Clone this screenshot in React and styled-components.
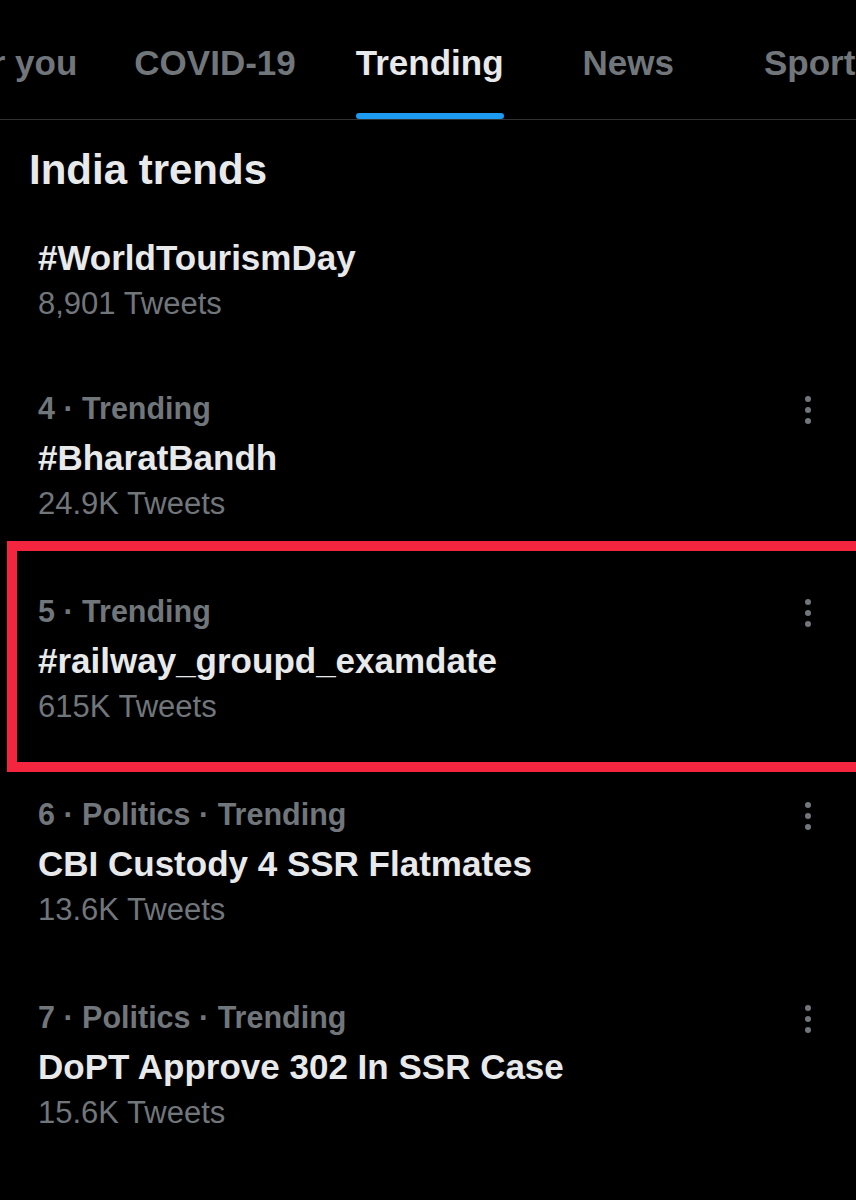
import React from 'react';
import styled, { createGlobalStyle } from 'styled-components';

const GlobalStyle = createGlobalStyle`
  html, body {
    margin: 0;
    padding: 0;
    background: #000;
    overflow-x: hidden;
  }
  body {
    font-family: "Liberation Sans", Arial, sans-serif;
    color: #e7e9ea;
  }
`

const Page = styled.div`
  width: 856px;
  min-height: 1200px;
  background: #000;
  overflow: hidden;
`

const TabBar = styled.nav`
  display: flex;
  height: 119px;
  border-bottom: 1px solid #2f3336;
  overflow: hidden;
`

const Tab = styled.div`
  flex-shrink: 0;
  display: flex;
  flex-direction: column;
  padding-top: 43px;
  margin-left: ${props => props.offset}px;
  font-size: 35px;
  line-height: 40px;
  font-weight: 700;
  white-space: nowrap;
  color: ${props => (props.active ? '#e7e9ea' : '#71767b')};
`

const Indicator = styled.div`
  margin-top: auto;
  height: 6px;
  border-radius: 3px;
  background: #1d9bf0;
`

const Title = styled.h2`
  margin: 0;
  padding: 22px 29px 0;
  font-size: 42px;
  line-height: 56px;
  font-weight: 700;
  color: #e7e9ea;
`

const Trend = styled.div`
  position: relative;
  display: flex;
  flex-direction: column;
  height: ${props => (props.first ? '164px' : '203px')};
  box-sizing: border-box;
  padding: ${props => (props.first ? '36px' : '20px')} 45px 0 38px;

  ${props => props.highlight && `
    &::after {
      content: '';
      position: absolute;
      top: -24px;
      bottom: -4px;
      left: 7px;
      right: -10px;
      border: 10px solid #f4263f;
      pointer-events: none;
    }
  `}
`

const MetaRow = styled.div`
  display: flex;
  align-items: center;
  justify-content: space-between;
  height: 52px;
`

const Meta = styled.span`
  font-size: 30.5px;
  line-height: 52px;
  font-weight: 700;
  color: #71767b;
`

const Dots = styled.svg`
  width: 8px;
  height: 30px;
  margin-top: 3px;
  margin-right: -1px;
`

const Name = styled.div`
  font-size: 35px;
  line-height: 48px;
  font-weight: 700;
  color: #e7e9ea;
`

const Count = styled.div`
  font-size: 31px;
  line-height: 44px;
  color: #71767b;
`

const tabs = [
  { label: 'For you', offset: -51 },
  { label: 'COVID-19', offset: 57 },
  { label: 'Trending', offset: 60, active: true },
  { label: 'News', offset: 79 },
  { label: 'Sports', offset: 90 },
]

const trends = [
  { name: '#WorldTourismDay', count: '8,901 Tweets' },
  { meta: '4 · Trending', name: '#BharatBandh', count: '24.9K Tweets' },
  { meta: '5 · Trending', name: '#railway_groupd_examdate', count: '615K Tweets', highlight: true },
  { meta: '6 · Politics · Trending', name: 'CBI Custody 4 SSR Flatmates', count: '13.6K Tweets' },
  { meta: '7 · Politics · Trending', name: 'DoPT Approve 302 In SSR Case', count: '15.6K Tweets' },
]

const MoreIcon = () => (
  <Dots viewBox="0 0 8 30">
    <circle cx="4" cy="4" r="3" fill="#71767b" />
    <circle cx="4" cy="15" r="3" fill="#71767b" />
    <circle cx="4" cy="26" r="3" fill="#71767b" />
  </Dots>
)

export default function App() {
  return (
    <Page>
      <GlobalStyle />
      <TabBar>
        {tabs.map(t => (
          <Tab key={t.label} offset={t.offset} active={t.active}>
            {t.label}
            {t.active && <Indicator />}
          </Tab>
        ))}
      </TabBar>
      <Title>India trends</Title>
      {trends.map((t, i) => (
        <Trend key={t.name} first={i === 0} highlight={t.highlight}>
          {t.meta && (
            <MetaRow>
              <Meta>{t.meta}</Meta>
              <MoreIcon />
            </MetaRow>
          )}
          <Name>{t.name}</Name>
          <Count>{t.count}</Count>
        </Trend>
      ))}
    </Page>
  );
}
